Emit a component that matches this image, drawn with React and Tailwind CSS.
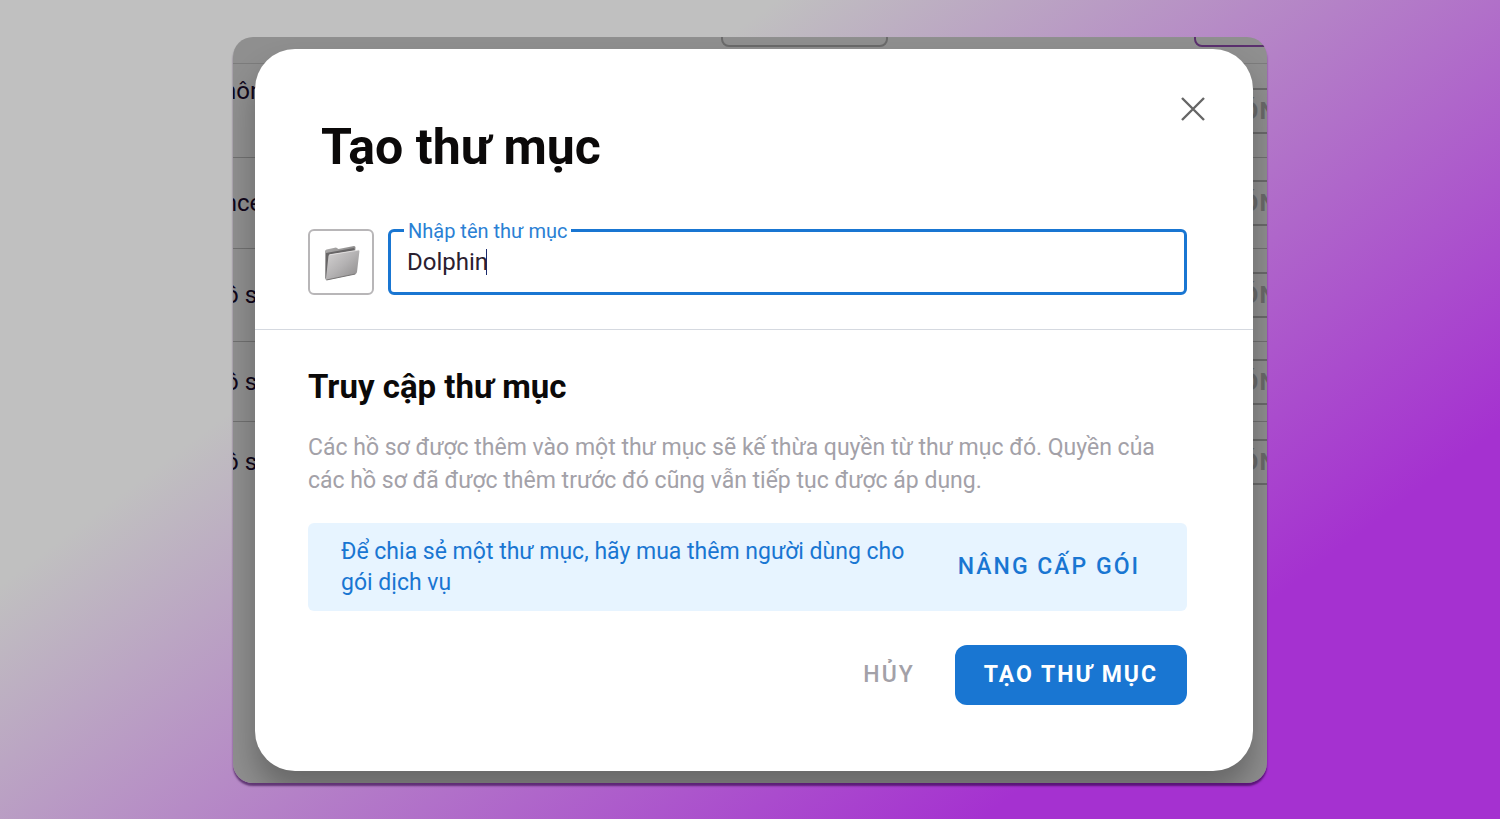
import React, { useState } from 'react';

const profiles = [
  { id: 1, name: 'Không', rowClass: 'h-[94px]', nameClass: 'pb-10', action: 'ĐÓNG' },
  { id: 2, name: 'Ance', rowClass: 'h-[91px]', nameClass: '', action: 'ĐÓNG' },
  { id: 3, name: 'Hồ sơ', rowClass: 'h-[93px]', nameClass: '', action: 'ĐÓNG' },
  { id: 4, name: 'Hồ sơ', rowClass: 'h-[80px]', nameClass: '', action: 'ĐÓNG' },
  { id: 5, name: 'Hồ sơ', rowClass: 'h-[80px] border-transparent', nameClass: '', action: 'ĐÓNG' },
];

const FolderIcon = () => (
  <svg viewBox="0 0 40 40" className="h-10 w-10" aria-hidden="true">
    <defs>
      <linearGradient id="folderBack" x1="0" y1="0" x2="1" y2="1">
        <stop offset="0" stopColor="#b0aeae" />
        <stop offset="1" stopColor="#6b6b6b" />
      </linearGradient>
      <linearGradient id="folderFront" x1="0" y1="0" x2="1" y2="1">
        <stop offset="0" stopColor="#d6d4d4" />
        <stop offset="0.5" stopColor="#b4b2b3" />
        <stop offset="1" stopColor="#8a8888" />
      </linearGradient>
    </defs>
    <path
      d="M4 9.5 Q4 7.8 5.5 7.4 L15 5.5 L17.5 7 L33 4 Q34.5 4 34.5 5.5 L34 12 L8 36 L5 38 L4 36 Z"
      fill="url(#folderBack)"
    />
    <path d="M5 11 L33 6 L34 9 L8 13 L6.5 36 L5 36 Z" fill="#686667" />
    <path
      d="M7.5 14 Q7.7 12.8 9 12.5 L37 8 Q38.6 8 38.4 9.5 L36 30 Q35.7 31.6 34.4 32 L6.5 38 Q4.8 38.2 5 36 Z"
      fill="url(#folderFront)"
    />
    <path d="M8.4 12.8 L37.8 8.1" stroke="#eceaea" strokeWidth="0.8" fill="none" />
    <path d="M5.4 38 L34.4 32" stroke="#777575" strokeWidth="1" fill="none" />
  </svg>
);

const CloseIcon = () => (
  <svg viewBox="0 0 24 24" className="h-6 w-6" fill="none" stroke="#666666" strokeWidth="2.4" aria-hidden="true">
    <path d="M1 1 L23 23 M23 1 L1 23" />
  </svg>
);

const ProfileList = () => (
  <div className="absolute inset-0 overflow-hidden text-2xl text-[#10061a]" aria-hidden="true">
    <div className="flex h-[27px] items-start justify-end gap-[306px] border-b border-[#7c7c7c]">
      <div className="-mt-10 h-[50px] w-[167px] shrink-0 rounded-lg border-2 border-[#6a6a6a]" />
      <div className="-mt-10 -mr-[94px] h-[50px] w-[167px] shrink-0 rounded-lg border-2 border-[#5a2f6e]" />
    </div>
    {profiles.map((profile) => (
      <div
        key={profile.id}
        className={`flex items-center justify-between border-b border-[#707070] ${profile.rowClass}`}
      >
        <span className={`-ml-[25px] ${profile.nameClass}`}>{profile.name}</span>
        <div className="-mr-[63px] flex h-[46px] w-[140px] shrink-0 items-center justify-center border-y-2 border-[#6a6a6a] font-bold tracking-wider text-[#6a6a6a]">
          {profile.action}
        </div>
      </div>
    ))}
  </div>
);

const CreateFolderDialog = () => {
  const [name, setName] = useState('Dolphin');

  const handleSubmit = (e) => {
    e.preventDefault();
  };

  return (
    <form
      role="dialog"
      aria-labelledby="dialogTitle"
      onSubmit={handleSubmit}
      className="relative mt-3 mr-[14px] mb-3 ml-[22px] rounded-[40px] bg-white pb-[66px] shadow-[0_20px_30px_rgba(0,0,0,0.28)]"
    >
      <div className="flex items-start justify-between pt-12 pr-12 pl-[66px]">
        <h1 id="dialogTitle" className="mt-5 text-[50px] leading-[60px] font-bold text-[#0b0909]">
          Tạo thư mục
        </h1>
        <button type="button" aria-label="Đóng">
          <CloseIcon />
        </button>
      </div>

      <div className="mt-[52px] flex items-center gap-[14px] border-b border-[#d5d9e0] pr-[66px] pb-[34px] pl-[53px]">
        <button
          type="button"
          aria-label="Biểu tượng thư mục"
          className="flex h-[66px] w-[66px] shrink-0 items-center justify-center rounded-md border-2 border-[#b8b6b8]"
        >
          <FolderIcon />
        </button>
        <div className="relative min-w-0 flex-1">
          <input
            id="folderName"
            type="text"
            value={name}
            onChange={(e) => setName(e.target.value)}
            className="block h-[66px] w-full rounded-md border-3 border-[#1976d2] px-4 text-2xl text-[#2a2030] outline-none"
          />
          <label
            htmlFor="folderName"
            className="absolute -top-3 left-4 bg-white px-1 text-xl leading-7 text-[#2a80d4]"
          >
            Nhập tên thư mục
          </label>
          <span className="absolute top-5 left-[98px] h-[26px] w-px bg-[#1a2a6c]" />
        </div>
      </div>

      <div className="pt-9 pr-[66px] pl-[53px]">
        <h2 className="text-[33px] leading-[42px] font-bold text-[#0b0909]">Truy cập thư mục</h2>
        <p className="mt-[23px] text-[23px] leading-[33px] text-[#a3a1a8]">
          Các hồ sơ được thêm vào một thư mục sẽ kế thừa quyền từ thư mục đó. Quyền của các hồ sơ đã được thêm trước đó
          cũng vẫn tiếp tục được áp dụng.
        </p>

        <div className="mt-[26px] flex items-center justify-between gap-8 rounded-md bg-[#e7f4ff] py-[13px] pr-[47px] pl-[33px] text-[#1976d2]">
          <p className="text-[23px] leading-[31px]">
            Để chia sẻ một thư mục, hãy mua thêm người dùng cho gói dịch vụ
          </p>
          <button type="button" className="shrink-0 text-[23px] font-medium tracking-[2px]">
            NÂNG CẤP GÓI
          </button>
        </div>

        <div className="mt-[34px] flex items-center justify-end gap-10">
          <button type="button" className="text-[23px] font-medium tracking-[2px] text-[#a3a1a8]">
            HỦY
          </button>
          <button
            type="submit"
            className="h-[60px] rounded-xl bg-[#1976d2] px-[29px] text-[23px] font-bold tracking-[2px] text-white"
          >
            TẠO THƯ MỤC
          </button>
        </div>
      </div>
    </form>
  );
};

const App = () => {
  return (
    <div className="min-h-screen bg-[linear-gradient(143deg,#c0c0c0_30%,#a531d0_80%)] py-9 font-[Roboto,sans-serif]">
      <div className="mx-auto mt-px w-full max-w-[1034px] rounded-[20px] shadow-[0_3px_2px_rgba(40,0,60,0.6)]">
        <div className="relative flow-root overflow-hidden rounded-[20px] bg-[#8f8f8f]">
          <ProfileList />
          <CreateFolderDialog />
        </div>
      </div>
    </div>
  );
};

export default App;
